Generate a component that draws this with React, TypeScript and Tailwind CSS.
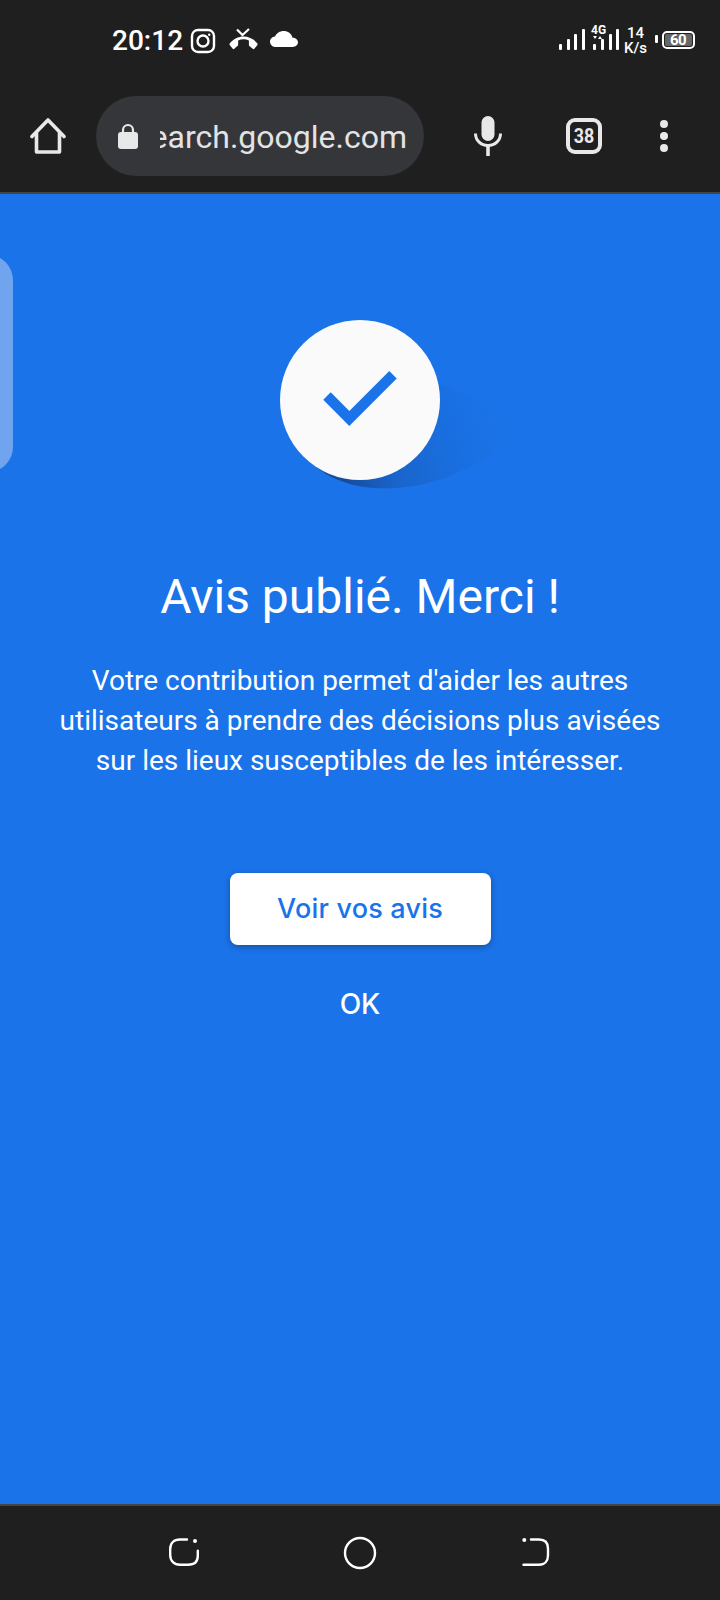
import React from 'react';

const StatusBar = () => (
  <div className="flex h-[82px] items-start pt-[25px] text-white">
    <span className="ml-[112px] w-[73px] text-[28px] font-medium leading-[32px]">20:12</span>
    <svg className="ml-[5px] mt-[3px]" width="26" height="26" viewBox="0 0 26 26" fill="none" stroke="white" strokeWidth="2.4">
      <rect x="2" y="2" width="22" height="22" rx="6" />
      <circle cx="13" cy="13" r="5.5" />
      <circle cx="19.2" cy="6.8" r="1.2" fill="white" stroke="none" />
    </svg>
    <svg className="ml-[13px] mt-[3px]" width="29" height="24" viewBox="0 0 29 24" fill="white">
      <path transform="translate(0.500 -1.500) scale(1.170 1.430)" d="M12 9c-1.600 0-3.150.25-4.600.72v3.100c0 .39-.23.74-.56.9-.98.49-1.870 1.120-2.660 1.850-.18.18-.43.28-.7.28-.28 0-.53-.11-.71-.29L.29 13.080c-.18-.17-.29-.42-.29-.7 0-.28.11-.53.29-.71C3.340 8.780 7.460 7 12 7s8.660 1.780 11.710 4.670c.18.18.29.43.29.71 0 .28-.11.53-.29.71l-2.480 2.480c-.18.18-.43.29-.71.29-.27 0-.52-.11-.7-.28-.79-.74-1.690-1.360-2.670-1.850-.33-.16-.56-.5-.56-.9v-3.100C15.150 9.250 13.600 9 12 9z" />
      <path d="M8 1.500l5.500 5.500L20 1" fill="none" stroke="white" strokeWidth="2.200" />
    </svg>
    <svg className="ml-[12px] mt-[6px]" width="28" height="16" viewBox="0 0 28 16" fill="white">
      <path d="M6 16c-3.300 0-6-2.400-6-5.300 0-2.700 2.200-4.900 5-5.200C6.500 2.200 9.900 0 13.700 0c4.200 0 7.800 2.700 8.700 6.400 3.100.2 5.600 2.300 5.600 4.900 0 2.600-2.500 4.700-5.500 4.700z" />
    </svg>
    <div className="flex-1" />
    <svg className="mr-[2px] mt-[-1px] overflow-visible" width="62" height="32" viewBox="0 0 62 32" fill="white">
      <rect x="0" y="20" width="3" height="6" rx="1" />
      <rect x="8" y="15" width="3" height="11" rx="1" />
      <rect x="15" y="10" width="3" height="16" rx="1" />
      <rect x="23" y="5" width="3" height="21" rx="1" />
      <rect x="34" y="20" width="3" height="6" rx="1" />
      <rect x="42" y="15" width="3" height="11" rx="1" />
      <rect x="50" y="10" width="3" height="16" rx="1" />
      <rect x="57" y="5" width="3" height="21" rx="1" />
      <path d="M34 12h4l-2 3zM39 15h4l-2-3z" />
      <text x="32" y="10" fontSize="12" fontWeight="700" fontFamily="Roboto, sans-serif">4G</text>
    </svg>
    <div className="mr-[7px] mt-[1px] flex w-[25px] flex-col items-center text-[15px] font-medium leading-[15px]">
      <span>14</span>
      <span>K/s</span>
    </div>
    <div className="mr-[4px] mt-[10px] h-[8px] w-[3px] rounded-[1px] bg-white" />
    <div className="mr-[25px] mt-[6px] flex h-[18px] w-[33px] items-center rounded-[5px] border-2 border-white p-[1px]">
      <div className="flex h-full w-full items-center justify-start rounded-[2px] bg-[#666]">
        <span className="ml-[5px] text-[15px] font-bold leading-none tracking-[-0.5px]">60</span>
      </div>
    </div>
  </div>
);

const Toolbar = () => (
  <div className="flex h-[112px] items-start border-b-2 border-[#444] pt-[14px]">
    <svg className="ml-[30px] mt-[22px]" width="36" height="36" viewBox="0 0 36 36" fill="none" stroke="#e8e8e8" strokeWidth="3.600" strokeLinejoin="round" strokeLinecap="round">
      <path d="M2 18.500L18 2l16 16.500" />
      <path d="M6.500 15v19h23V15" />
    </svg>
    <div className="ml-[30px] flex h-[80px] w-[328px] items-center rounded-[40px] bg-[#35363a]">
      <svg className="ml-[22px]" width="20" height="26" viewBox="0 0 20 26" fill="#e8e8e8">
        <path d="M5 11V7a5 5 0 0110 0v4" fill="none" stroke="#e8e8e8" strokeWidth="2.200" />
        <rect x="0" y="9" width="20" height="17" rx="3" />
      </svg>
      <div className="ml-[22px] flex h-[50px] w-[247px] items-center justify-end overflow-hidden pt-[2px]">
        <span className="shrink-0 text-[32px] leading-[48px] text-[#e3e3e3]">search.google.com</span>
      </div>
    </div>
    <svg className="ml-[50px] mt-[20px]" width="28" height="40" viewBox="0 0 28 40" fill="none">
      <rect x="7.500" y="0" width="13" height="25" rx="6.500" fill="#e8e8e8" />
      <path d="M1.500 17.500c0 7 5.500 12 12.500 12s12.500-5 12.500-12" stroke="#e8e8e8" strokeWidth="3" />
      <path d="M14 29v11" stroke="#e8e8e8" strokeWidth="3.600" />
    </svg>
    <div className="ml-[64px] mt-[22px] flex h-[36px] w-[36px] items-center justify-center rounded-[9px] border-[4px] border-[#e8e8e8]">
      <span className="scale-x-[0.85] text-[21px] font-bold leading-none text-[#e8e8e8]">38</span>
    </div>
    <div className="ml-[58px] mt-[24px] flex flex-col gap-[4px]">
      <div className="h-[8px] w-[8px] rounded-full bg-[#e8e8e8]" />
      <div className="h-[8px] w-[8px] rounded-full bg-[#e8e8e8]" />
      <div className="h-[8px] w-[8px] rounded-full bg-[#e8e8e8]" />
    </div>
  </div>
);

const CheckBadge = () => (
  <div className="relative mt-[126px] h-[160px] w-[160px]">
    <svg className="absolute left-0 top-0 overflow-visible" width="160" height="160" viewBox="0 0 160 160">
      <defs>
        <linearGradient id="sh" gradientUnits="userSpaceOnUse" x1="70" y1="170" x2="245" y2="105">
          <stop offset="0" stopColor="#15428a" stopOpacity="0.8" />
          <stop offset="0.25" stopColor="#174f9f" stopOpacity="0.4" />
          <stop offset="0.55" stopColor="#174f9f" stopOpacity="0.15" />
          <stop offset="1" stopColor="#1a73e8" stopOpacity="0" />
        </linearGradient>
      </defs>
      <path d="M30 140C50 165 90 170 115 168 170 165 220 135 250 100L150 60z" fill="url(#sh)" />
    </svg>
    <div className="absolute inset-0 rounded-full bg-[#fafafa]">
      <svg width="160" height="160" viewBox="0 0 160 160">
        <path d="M47 76L69.300 98.500 113 54.700" fill="none" stroke="#1a73e8" strokeWidth="10.500" />
      </svg>
    </div>
  </div>
);

const NavBar = () => (
  <div className="flex h-[96px] items-start justify-center border-t-2 border-[#444] pt-[30px]">
    <svg width="32" height="32" viewBox="0 0 32 32" fill="none" stroke="white" strokeWidth="2.400" strokeLinecap="round">
      <path d="M19 3.500H12C6 3.500 2.200 7 2.200 13v6c0 6 4 9.800 9.800 9.800h8c6 0 9.800-3 9.800-9v-5" />
      <circle cx="27" cy="5" r="2" fill="white" stroke="none" />
    </svg>
    <svg className="ml-[143px]" width="34" height="34" viewBox="0 0 34 34" fill="none" stroke="white" strokeWidth="2.400">
      <circle cx="17" cy="17" r="15" />
    </svg>
    <svg className="ml-[144px]" width="32" height="32" viewBox="0 0 32 32" fill="none" stroke="white" strokeWidth="2.400" strokeLinecap="round">
      <path d="M10 3.500h8c6 0 9 3.500 9 9v7c0 5.500-3.500 9.300-9 9.300H2.500" />
      <circle cx="3.300" cy="4" r="2" fill="white" stroke="none" />
    </svg>
  </div>
);

export default function App() {
  return (
    <div className='flex h-[1600px] w-[720px] flex-col overflow-hidden bg-[#1f1f1f] font-["Roboto","Liberation_Sans",sans-serif]'>
      <StatusBar />
      <Toolbar />
      <main className="relative flex flex-1 flex-col items-center bg-[#1a73e8] text-white">
        {/* tab peeking in from the left */}
        <div className="absolute left-[-12px] top-[61px] h-[217px] w-[25px] rounded-r-[25px] bg-[#70a4ee]" />
        <CheckBadge />
        <h1 className="mt-[81px] text-[48px] font-normal leading-[72px]">Avis publié. Merci !</h1>
        <p className="mt-[28px] w-[620px] text-center text-[28px] leading-[40px]">
          Votre contribution permet d'aider les autres utilisateurs à prendre des décisions plus avisées sur les lieux susceptibles de les intéresser.
        </p>
        <button className="mt-[92px] h-[72px] w-[261px] rounded-[8px] bg-white font-['Inter',sans-serif] text-[27px] font-medium tracking-[0.2px] text-[#1a73e8] shadow-[0_2px_6px_rgba(0,0,0,0.3)]">
          Voir vos avis
        </button>
        <button className="mt-[40px] font-['Inter',sans-serif] text-[28px] font-medium leading-[38px] text-white">OK</button>
      </main>
      <NavBar />
    </div>
  );
}
